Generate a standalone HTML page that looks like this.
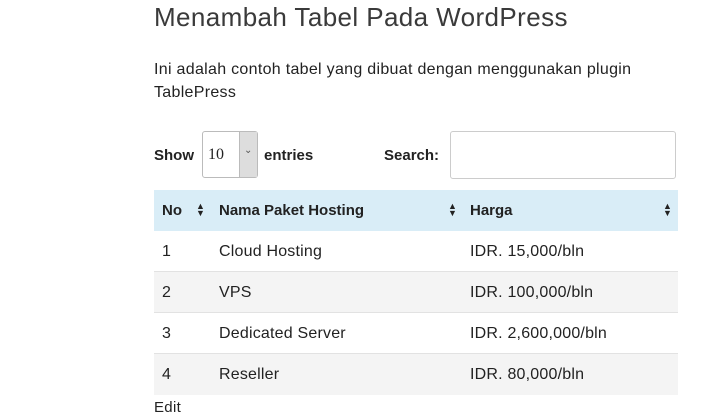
<!DOCTYPE html>
<html><head><meta charset="utf-8"><style>
html,body{margin:0;padding:0;background:#fff;width:728px;height:411px;overflow:hidden;font-family:"Liberation Sans",sans-serif;color:#222}
.t{position:absolute;white-space:nowrap}
h1{position:absolute;left:154px;top:0;margin:0;font-weight:normal;font-size:26px;color:#3a3a3a;line-height:34px;letter-spacing:0.4px}
.p{left:154px;font-size:16px;color:#222;letter-spacing:0.3px}
.b{font-weight:bold;font-size:15px;color:#222}
.sel{position:absolute;left:202px;top:131px;width:56px;height:47px;border:1px solid #bbb;border-radius:3px;background:#fff;box-sizing:border-box}
.sel .a{position:absolute;right:0;top:0;width:17px;height:45px;background:#ddd;border-left:1px solid #bbb}
.inp{position:absolute;left:450px;top:131px;width:226px;height:48px;border:1px solid #ccc;border-radius:3px;box-sizing:border-box}
.row{position:absolute;left:154px;width:524px;height:41px;border-bottom:1px solid #e2e2e2;box-sizing:border-box}
.row span{position:absolute;top:12px;font-size:16px;color:#222;letter-spacing:0.2px}
.hd{background:#d9edf7;border:none}
.hd span{font-weight:bold;font-size:15px;top:12px;letter-spacing:0}
.s{position:absolute;font-size:9px;line-height:7px;color:#222}
</style></head><body>
<h1>Menambah Tabel Pada WordPress</h1>
<div class="t p" style="top:61px">Ini adalah contoh tabel yang dibuat dengan menggunakan plugin</div>
<div class="t p" style="top:84px">TablePress</div>
<div class="t b" style="left:154px;top:147px">Show</div>
<div class="sel"><span class="t" style="left:5px;top:14px;font-family:'Liberation Serif',serif;font-size:16px">10</span><div class="a"><span class="t" style="left:4px;top:13px;font-size:10px;color:#555">⌄</span></div></div>
<div class="t b" style="left:264px;top:147px">entries</div>
<div class="t b" style="left:384px;top:147px">Search:</div>
<div class="inp"></div>
<div class="row hd" style="top:190px"><span style="left:8px">No</span><span style="left:65px">Nama Paket Hosting</span><span style="left:316px">Harga</span></div>
<div class="t s" style="left:196px;top:203px">▲<br>▼</div>
<div class="t s" style="left:448px;top:203px">▲<br>▼</div>
<div class="t s" style="left:663px;top:203px">▲<br>▼</div>
<div class="row" style="top:231px"><span style="left:8px">1</span><span style="left:65px">Cloud Hosting</span><span style="left:316px">IDR. 15,000/bln</span></div>
<div class="row" style="top:272px;background:#f4f4f4"><span style="left:8px">2</span><span style="left:65px">VPS</span><span style="left:316px">IDR. 100,000/bln</span></div>
<div class="row" style="top:313px"><span style="left:8px">3</span><span style="left:65px">Dedicated Server</span><span style="left:316px">IDR. 2,600,000/bln</span></div>
<div class="row" style="top:354px;background:#f4f4f4;border-bottom:none"><span style="left:8px">4</span><span style="left:65px">Reseller</span><span style="left:316px">IDR. 80,000/bln</span></div>
<div class="t p" style="top:399px;font-size:15px">Edit</div>
</body></html>
